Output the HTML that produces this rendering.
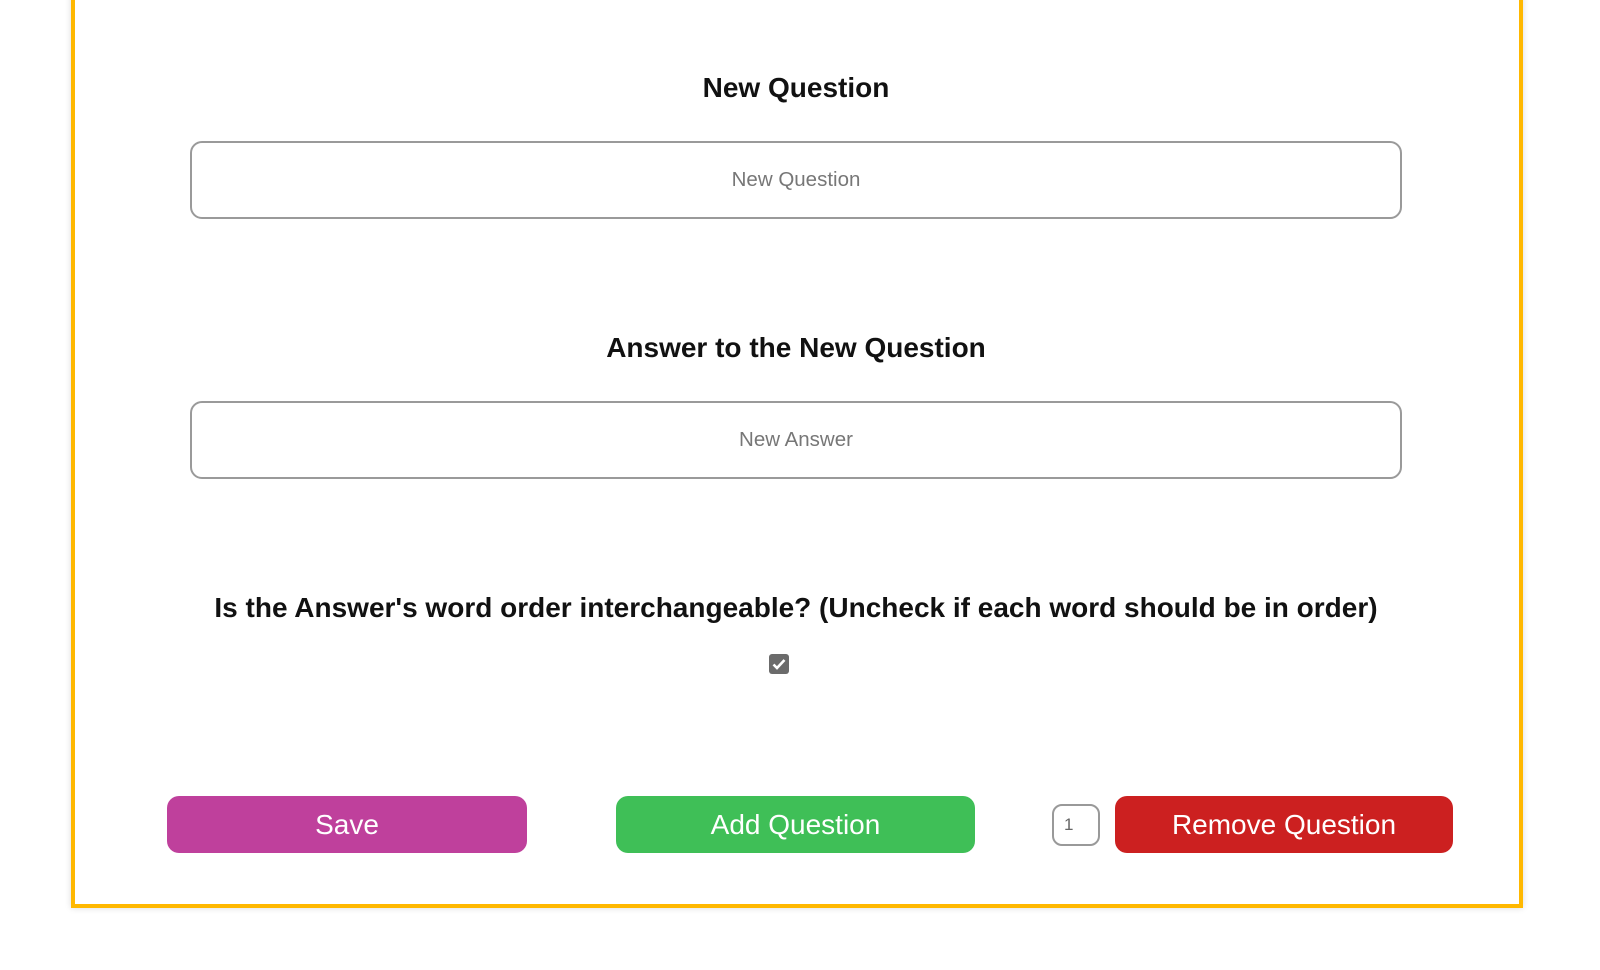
<!DOCTYPE html>
<html><head><style>
body{margin:0;width:1600px;height:970px;background:#fff;font-family:"Liberation Sans",sans-serif;position:relative;overflow:hidden}
.card{position:absolute;left:71px;top:-10px;width:1444px;height:910px;border:4px solid #ffb800;box-shadow:0 0 6px rgba(0,0,0,.15);background:#fff}
.h{position:absolute;left:0;width:1600px;text-align:center;font-weight:bold;font-size:28px;color:#111}
.in{position:absolute;left:190px;width:1208px;height:74px;border:2px solid #9a9a9a;border-radius:12px;text-align:center;line-height:74px;font-size:20.5px;color:#777}
.btn{position:absolute;top:796px;height:57px;border-radius:12px;color:#fff;font-size:28px;text-align:center;line-height:57px}
</style></head><body>
<div class="card"></div>
<div class="h" style="top:72px;left:-4px">New Question</div>
<div class="in" style="top:141px">New Question</div>
<div class="h" style="top:332px;left:-4px">Answer to the New Question</div>
<div class="in" style="top:401px">New Answer</div>
<div class="h" style="top:592px;left:-4px">Is the Answer's word order interchangeable? (Uncheck if each word should be in order)</div>
<div style="position:absolute;left:769px;top:654px;width:20px;height:20px;background:#6b6b6b;border-radius:3px">
<svg width="20" height="20" viewBox="0 0 20 20"><path d="M4.5 10.5l3.5 3.5 7.5-8" stroke="#fff" stroke-width="2.6" fill="none"/></svg></div>
<div class="btn" style="left:167px;width:360px;background:#bf409c">Save</div>
<div class="btn" style="left:616px;width:359px;background:#3fbf57">Add Question</div>
<div style="position:absolute;left:1052px;top:804px;width:44px;height:38px;border:2px solid #999;border-radius:10px;font-size:17px;line-height:38px;color:#666;text-indent:10px;box-sizing:content-box">1</div>
<div class="btn" style="left:1115px;width:338px;background:#cc2020">Remove Question</div>
</body></html>
